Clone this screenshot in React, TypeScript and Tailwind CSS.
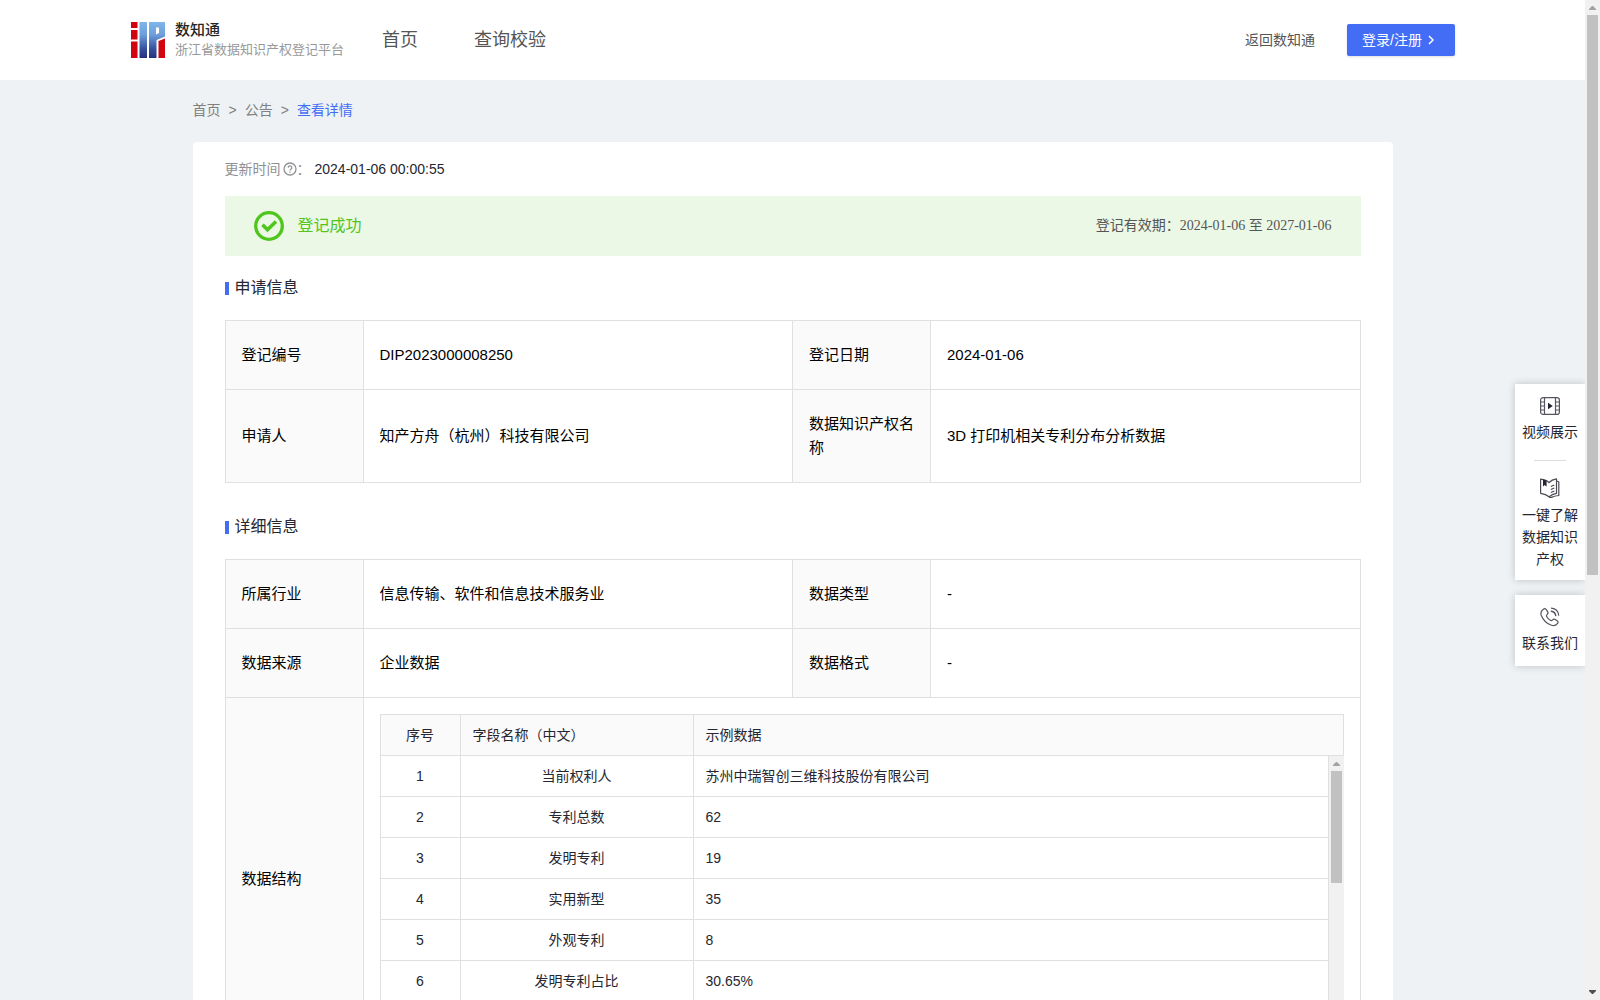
import React from 'react';

interface InfoItem {
  label: string;
  value: string;
}

interface FieldRow {
  name: string;
  sample: string;
}

const applyRows: InfoItem[][] = [
  [
    { label: '登记编号', value: 'DIP2023000008250' },
    { label: '登记日期', value: '2024-01-06' },
  ],
  [
    { label: '申请人', value: '知产方舟（杭州）科技有限公司' },
    { label: '数据知识产权名称', value: '3D 打印机相关专利分布分析数据' },
  ],
];

const detailRows: InfoItem[][] = [
  [
    { label: '所属行业', value: '信息传输、软件和信息技术服务业' },
    { label: '数据类型', value: '-' },
  ],
  [
    { label: '数据来源', value: '企业数据' },
    { label: '数据格式', value: '-' },
  ],
];

const fields: FieldRow[] = [
  { name: '当前权利人', sample: '苏州中瑞智创三维科技股份有限公司' },
  { name: '专利总数', sample: '62' },
  { name: '发明专利', sample: '19' },
  { name: '实用新型', sample: '35' },
  { name: '外观专利', sample: '8' },
  { name: '发明专利占比', sample: '30.65%' },
];

const Logo = () => (
  <svg className="w-[34px] h-9 shrink-0" viewBox="0 0 34 36" aria-hidden="true">
    <defs>
      <linearGradient id="logoBlue" gradientUnits="userSpaceOnUse" x1="0" y1="0" x2="0" y2="36">
        <stop offset="0" stopColor="#7fb6e8" />
        <stop offset="0.35" stopColor="#6d9fdc" />
        <stop offset="0.75" stopColor="#35509f" />
        <stop offset="1" stopColor="#26307c" />
      </linearGradient>
    </defs>
    <path fill="#d00510" d="M0 0h6.500v6H0zM0 8h6.500v9.500H0zM0 19.500h6.500V36H0zM27.500 19L34 16.500V36h-6.500z" />
    <path fill="url(#logoBlue)" d="M8.500 0h7.500v36H8.500z" />
    <path fill="url(#logoBlue)" d="M18 0h16v14.500L25.500 18v18H18z" />
    <path fill="#fff" d="M25 5.500h3v5.500l-3 1.500z" />
  </svg>
);

const CheckCircle = () => (
  <svg className="w-[30px] h-[30px]" viewBox="0 0 30 30" fill="none" stroke="#4fc61c" aria-hidden="true">
    <circle cx="15" cy="15" r="13.300" strokeWidth="3.300" />
    <path d="M8.500 13.800l5 5L22 10.500" strokeWidth="3.600" />
  </svg>
);

const HelpIcon = () => (
  <svg className="w-3.5 h-3.5" viewBox="0 0 14 14" fill="none" stroke="#909094" aria-hidden="true">
    <circle cx="7" cy="7" r="6" strokeWidth="1.300" />
    <path d="M5.200 5.700a1.800 1.800 0 1 1 2.700 1.500c-.6.400-.9.600-.9 1.300M7 9.500v1.200" strokeWidth="1.200" />
  </svg>
);

const VideoIcon = () => (
  <svg className="w-5 h-5" viewBox="0 0 20 20" fill="none" stroke="#55565f" strokeWidth="1.200" aria-hidden="true">
    <rect x="0.600" y="1.600" width="18.800" height="16.800" rx="2.500" />
    <path d="M4.500 1.600v16.800M15.500 1.600v16.800M.6 6h3.900M.6 10h3.900M.6 14h3.900M15.500 6h3.900M15.500 10h3.900M15.500 14h3.900" />
    <path d="M8 6.800v6.400l4.800-3.200z" fill="#252631" stroke="none" />
  </svg>
);

const BookIcon = () => (
  <svg className="w-5 h-5" viewBox="0 0 20 20" fill="none" stroke="#4a4b54" strokeWidth="1.200" strokeLinejoin="round" aria-hidden="true">
    <path d="M.6 1.200C4 1.500 7 2.300 9 4.500 11 2.300 13.500 1.200 16.500.8v14.500c-3 .4-5.500 1.500-7.500 3.500-2.200-2-5-3-8.400-3.500z" />
    <path d="M16.500 3l2.300.8v13.700c-3 .2-5 .7-7.300 1.900H9" />
    <path d="M3 1.500v7l1.800-1.500 1.800 1.800V2.600z" fill="#252631" stroke="none" />
    <path d="M10.800 8.500l3.500-1.500M10.800 11.500l3.500-1.500M10.800 14.500l3.500-1.500" />
  </svg>
);

const PhoneIcon = () => (
  <svg className="w-5 h-5" viewBox="0 0 20 20" fill="none" stroke="#55565f" strokeWidth="1.200" strokeLinecap="round" strokeLinejoin="round" aria-hidden="true">
    <path d="M3.300 2.300c1.200-1 2.200-.8 3 .4l1.300 2c.7 1.100.5 1.900-.4 2.700-.9.700-1 1.300-.4 2.300.9 1.500 2 2.700 3.500 3.600 1 .6 1.600.4 2.300-.4.8-1 1.700-1.100 2.700-.4l1.800 1.300c1.100.8 1.200 1.800.3 2.900-1.500 1.900-3.600 2.500-6 1.600C6.500 16.500 3 12.800 1.200 8.200.4 5.900 1.300 3.800 3.300 2.300z" />
    <path d="M11.500 1.200c4 .4 6.700 3 7.200 7" />
    <path d="M11.300 4.200c2.500.4 4 1.900 4.400 4.300" strokeWidth="1.500" />
  </svg>
);

const ArrowUp = () => (
  <svg className="w-[15px] h-[15px] shrink-0" viewBox="0 0 15 15" aria-hidden="true">
    <path d="M7 6h1l3 3v1H4V9z" fill="#a3a3a3" />
  </svg>
);

const ArrowDown = () => (
  <svg className="w-[15px] h-[15px] shrink-0" viewBox="0 0 15 15" aria-hidden="true">
    <path d="M7 9h1l3-3V5H4v1z" fill="#505050" />
  </svg>
);

const SectionTitle = ({ children }: { children: React.ReactNode }) => (
  <h2 className="flex items-center gap-1.5 text-base leading-6 text-[#252631]">
    <span className="w-1 h-[13px] bg-[#446df6]" />
    {children}
  </h2>
);

const InfoRows = ({ rows }: { rows: InfoItem[][] }) => (
  <>
    {rows.map((row) => (
      <tr key={row[0].label}>
        {row.map((item) => (
          <React.Fragment key={item.label}>
            <th scope="row" className="border border-[#e0e0e0] bg-[#fafafa] px-4 py-[22px] text-left font-normal">
              {item.label}
            </th>
            <td className="border border-[#e0e0e0] px-4 py-[22px]">{item.value}</td>
          </React.Fragment>
        ))}
      </tr>
    ))}
  </>
);

const InfoCols = () => (
  <colgroup>
    <col className="w-[138px]" />
    <col />
    <col className="w-[138px]" />
    <col />
  </colgroup>
);

const FieldTable = () => (
  <div className="border-l border-t border-[#e0e0e0] text-sm leading-5 text-[#252631]">
    <table className="w-full table-fixed border-separate border-spacing-0">
      <thead>
        <tr className="bg-[#fafafa] text-left">
          <th scope="col" className="w-20 h-[41px] border-r border-b border-[#e0e0e0] text-center font-normal">序号</th>
          <th scope="col" className="w-[233px] border-r border-b border-[#e0e0e0] px-3 font-normal">字段名称（中文）</th>
          <th scope="col" className="border-r border-b border-[#e0e0e0] px-3 font-normal">示例数据</th>
        </tr>
      </thead>
    </table>
    <div className="flex h-72 overflow-hidden">
      <div className="flex-1">
        <table className="w-full table-fixed border-separate border-spacing-0">
          <tbody>
            {fields.map((field, index) => (
              <tr key={field.name}>
                <td className="w-20 h-[41px] border-r border-b border-[#e0e0e0] text-center">{index + 1}</td>
                <td className="w-[233px] border-r border-b border-[#e0e0e0] px-3 text-center">{field.name}</td>
                <td className="border-r border-b border-[#e0e0e0] px-3">{field.sample}</td>
              </tr>
            ))}
          </tbody>
        </table>
      </div>
      <div className="flex w-[15px] flex-col bg-[#f1f1f1]">
        <ArrowUp />
        <div className="mx-0.5 h-28 bg-[#c1c1c1]" />
      </div>
    </div>
  </div>
);

const Header = () => (
  <header className="flex h-20 items-center bg-white pr-[130px] pl-[131px] text-[#555555]">
    <Logo />
    <div className="ml-2.5">
      <p className="text-[15px] leading-5 font-medium text-[#252525]">数知通</p>
      <p className="text-[13px] leading-5 text-[#999999]">浙江省数据知识产权登记平台</p>
    </div>
    <nav className="ml-[38px] flex gap-14 text-lg">
      <a href="#">首页</a>
      <a href="#">查询校验</a>
    </nav>
    <a href="#" className="ml-auto text-sm">返回数知通</a>
    <button
      type="button"
      className="ml-8 flex h-8 w-[108px] items-center gap-1.5 rounded-xs bg-[#446df6] px-[15px] text-sm text-white shadow-sm"
    >
      登录/注册
      <svg className="w-1.5 h-2.5" viewBox="0 0 6 10" fill="none" stroke="currentColor" strokeWidth="1.500" aria-hidden="true">
        <path d="M1 1l4 4-4 4" />
      </svg>
    </button>
  </header>
);

const SideTools = () => (
  <aside className="absolute top-96 right-0 flex w-[70px] flex-col gap-[15px] text-center text-sm leading-[22px] text-[#252631]">
    <div className="flex flex-col items-center bg-white px-1.5 pt-3 pb-2.5 shadow-[0_0_8px_rgba(0,0,0,0.2)]">
      <a href="#" className="flex flex-col items-center gap-[5px]">
        <VideoIcon />
        视频展示
      </a>
      <hr className="my-[17px] w-8 border-[#dddddd]" />
      <a href="#" className="flex flex-col items-center gap-1.5">
        <BookIcon />
        一键了解数据知识产权
      </a>
    </div>
    <a href="#" className="flex flex-col items-center gap-[5px] bg-white pt-3 pb-3 shadow-[0_0_8px_rgba(0,0,0,0.2)]">
      <PhoneIcon />
      联系我们
    </a>
  </aside>
);

export default function App() {
  return (
    <div className="flex h-screen overflow-hidden bg-[#eef2f5] font-['Liberation_Sans','Noto_Sans_CJK_SC',sans-serif]">
      <div className="relative min-w-0 flex-1 overflow-hidden">
        <Header />
        <main className="mx-auto max-w-[1200px]">
          <nav className="flex gap-2 pt-5 pb-[22px] text-sm leading-5 text-[#808080]">
            <a href="#">首页</a>
            <span>&gt;</span>
            <a href="#">公告</a>
            <span>&gt;</span>
            <a href="#" className="text-[#446df6]">查看详情</a>
          </nav>

          <div className="rounded bg-white px-8 pt-4 pb-8">
            <div className="flex items-center text-sm leading-[22px]">
              <span className="text-[#909094]">更新时间</span>
              <span className="ml-0.5 flex items-center text-[#909094]">
                <HelpIcon />：
              </span>
              <span className="ml-1 text-[#252631]">2024-01-06 00:00:55</span>
            </div>

            <div className="mt-4 flex h-[60px] items-center bg-[#ebf8e6] px-[29px]">
              <CheckCircle />
              <span className="ml-3.5 text-base text-[#52c41a]">登记成功</span>
              <span className="ml-auto font-['Liberation_Serif','Noto_Sans_CJK_SC',serif] text-sm text-[#555555]">
                登记有效期：2024-01-06 至 2027-01-06
              </span>
            </div>

            <div className="mt-5 mb-5">
              <SectionTitle>申请信息</SectionTitle>
            </div>
            <table className="w-full table-fixed border-collapse text-[15px] leading-6 text-black">
              <InfoCols />
              <tbody>
                <InfoRows rows={applyRows} />
              </tbody>
            </table>

            <div className="mt-8 mb-5">
              <SectionTitle>详细信息</SectionTitle>
            </div>
            <table className="w-full table-fixed border-collapse text-[15px] leading-6 text-black">
              <InfoCols />
              <tbody>
                <InfoRows rows={detailRows} />
                <tr>
                  <th scope="row" className="border border-[#e0e0e0] bg-[#fafafa] px-4 text-left font-normal">数据结构</th>
                  <td colSpan={3} className="border border-[#e0e0e0] p-4">
                    <FieldTable />
                  </td>
                </tr>
              </tbody>
            </table>
          </div>
        </main>
        <SideTools />
      </div>

      {/* page scroll track */}
      <div className="flex w-[15px] shrink-0 flex-col bg-[#f1f1f1]">
        <ArrowUp />
        <div className="mx-0.5 h-[56%] bg-[#c1c1c1]" />
        <div className="flex-1" />
        <ArrowDown />
      </div>
    </div>
  );
}
